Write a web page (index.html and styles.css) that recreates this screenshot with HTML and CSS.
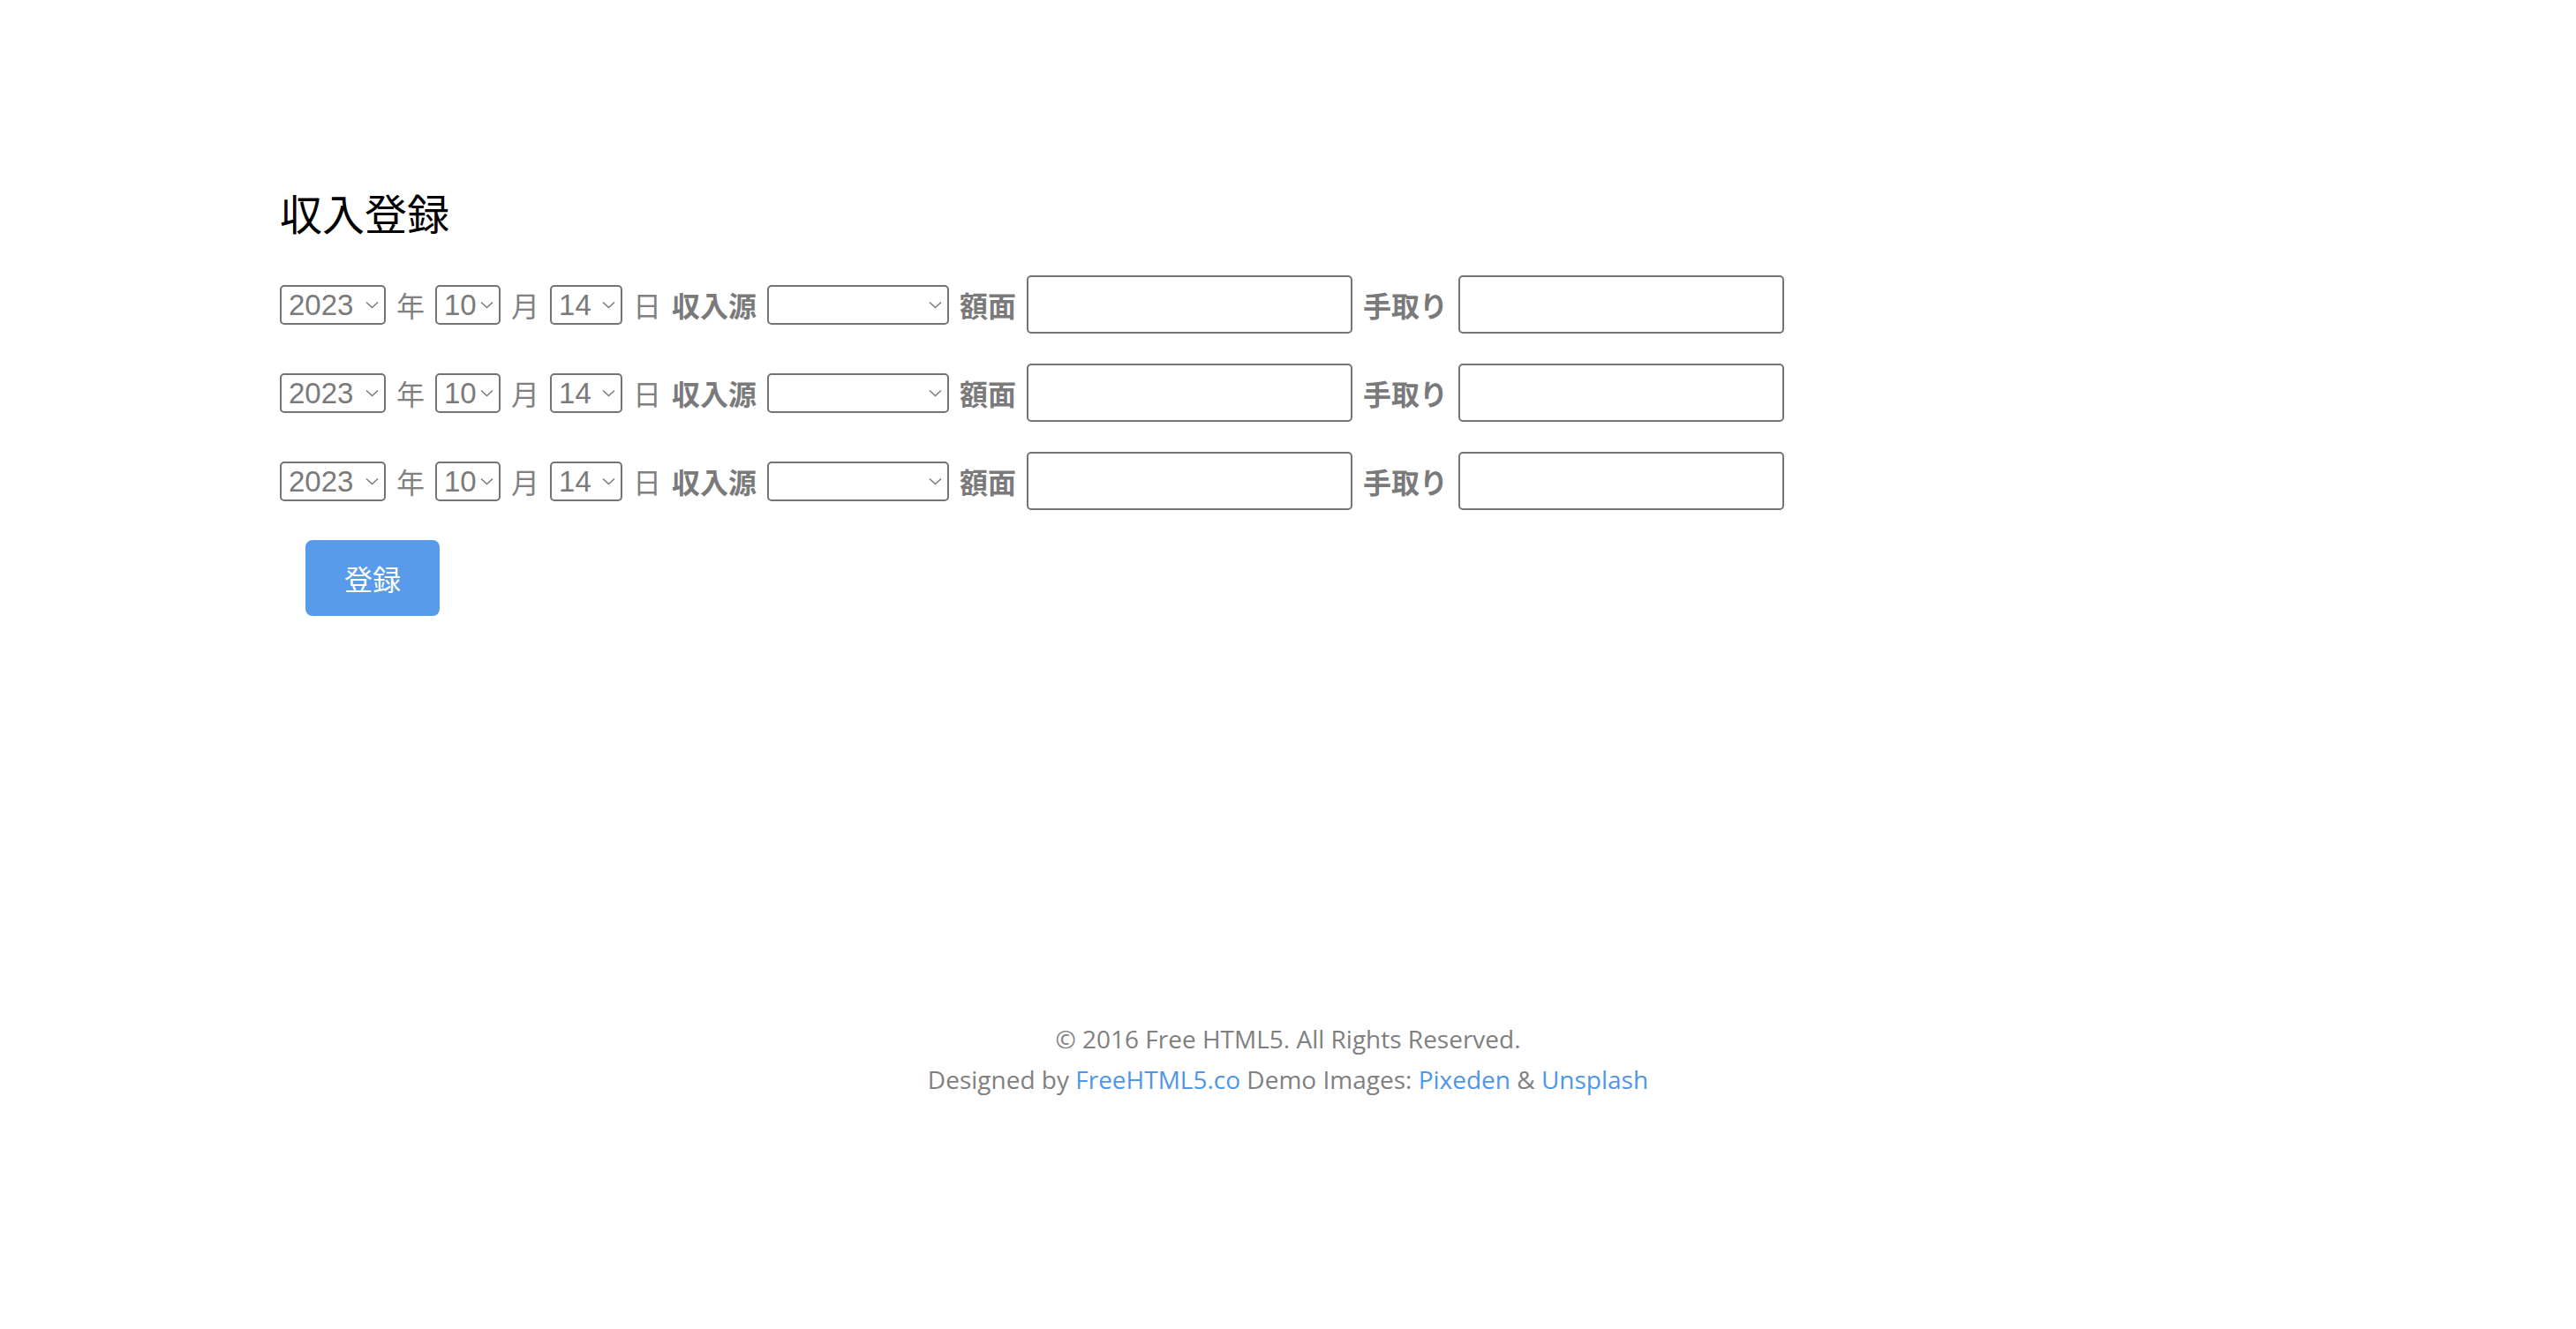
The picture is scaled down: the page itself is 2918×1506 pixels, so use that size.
FILE: index.html
```html
<!DOCTYPE html>
<html lang="ja">
<head>
<meta charset="utf-8">
<title>収入登録</title>
<link rel="stylesheet" href="styles.css">
</head>
<body>
<main class="page">
  <h2 class="title">収入登録</h2>
  <form class="form">
    <div class="row">
      <span class="sel sel-year"><select><option>2023</option></select><svg class="chev" width="15" height="9" viewBox="0 0 15 9"><path d="M1 1.5l6.5 6 6.5-6" fill="none" stroke="#7a7a7a" stroke-width="1.5"/></svg></span>
      <span class="lbl">年</span>
      <span class="sel sel-month"><select><option>10</option></select><svg class="chev" width="15" height="9" viewBox="0 0 15 9"><path d="M1 1.5l6.5 6 6.5-6" fill="none" stroke="#7a7a7a" stroke-width="1.5"/></svg></span>
      <span class="lbl">月</span>
      <span class="sel sel-day"><select><option>14</option></select><svg class="chev" width="15" height="9" viewBox="0 0 15 9"><path d="M1 1.5l6.5 6 6.5-6" fill="none" stroke="#7a7a7a" stroke-width="1.5"/></svg></span>
      <span class="lbl">日</span>
      <span class="lbl bold">収入源</span>
      <span class="sel sel-src"><select><option></option></select><svg class="chev" width="15" height="9" viewBox="0 0 15 9"><path d="M1 1.5l6.5 6 6.5-6" fill="none" stroke="#7a7a7a" stroke-width="1.5"/></svg></span>
      <span class="lbl bold">額面</span>
      <input class="txt" type="text">
      <span class="lbl bold">手取り</span>
      <input class="txt" type="text">
    </div>
    <div class="row">
      <span class="sel sel-year"><select><option>2023</option></select><svg class="chev" width="15" height="9" viewBox="0 0 15 9"><path d="M1 1.5l6.5 6 6.5-6" fill="none" stroke="#7a7a7a" stroke-width="1.5"/></svg></span>
      <span class="lbl">年</span>
      <span class="sel sel-month"><select><option>10</option></select><svg class="chev" width="15" height="9" viewBox="0 0 15 9"><path d="M1 1.5l6.5 6 6.5-6" fill="none" stroke="#7a7a7a" stroke-width="1.5"/></svg></span>
      <span class="lbl">月</span>
      <span class="sel sel-day"><select><option>14</option></select><svg class="chev" width="15" height="9" viewBox="0 0 15 9"><path d="M1 1.5l6.5 6 6.5-6" fill="none" stroke="#7a7a7a" stroke-width="1.5"/></svg></span>
      <span class="lbl">日</span>
      <span class="lbl bold">収入源</span>
      <span class="sel sel-src"><select><option></option></select><svg class="chev" width="15" height="9" viewBox="0 0 15 9"><path d="M1 1.5l6.5 6 6.5-6" fill="none" stroke="#7a7a7a" stroke-width="1.5"/></svg></span>
      <span class="lbl bold">額面</span>
      <input class="txt" type="text">
      <span class="lbl bold">手取り</span>
      <input class="txt" type="text">
    </div>
    <div class="row">
      <span class="sel sel-year"><select><option>2023</option></select><svg class="chev" width="15" height="9" viewBox="0 0 15 9"><path d="M1 1.5l6.5 6 6.5-6" fill="none" stroke="#7a7a7a" stroke-width="1.5"/></svg></span>
      <span class="lbl">年</span>
      <span class="sel sel-month"><select><option>10</option></select><svg class="chev" width="15" height="9" viewBox="0 0 15 9"><path d="M1 1.5l6.5 6 6.5-6" fill="none" stroke="#7a7a7a" stroke-width="1.5"/></svg></span>
      <span class="lbl">月</span>
      <span class="sel sel-day"><select><option>14</option></select><svg class="chev" width="15" height="9" viewBox="0 0 15 9"><path d="M1 1.5l6.5 6 6.5-6" fill="none" stroke="#7a7a7a" stroke-width="1.5"/></svg></span>
      <span class="lbl">日</span>
      <span class="lbl bold">収入源</span>
      <span class="sel sel-src"><select><option></option></select><svg class="chev" width="15" height="9" viewBox="0 0 15 9"><path d="M1 1.5l6.5 6 6.5-6" fill="none" stroke="#7a7a7a" stroke-width="1.5"/></svg></span>
      <span class="lbl bold">額面</span>
      <input class="txt" type="text">
      <span class="lbl bold">手取り</span>
      <input class="txt" type="text">
    </div>
    <div class="actions">
      <button class="btn" type="button">登録</button>
    </div>
  </form>
</main>
<footer class="footer">
  <p class="foot-line">© 2016 Free HTML5. All Rights Reserved.</p>
  <p class="foot-line">Designed by <a href="#">FreeHTML5.co</a> Demo Images: <a href="#">Pixeden</a> &amp; <a href="#">Unsplash</a></p>
</footer>
</body>
</html>
```

FILE: styles.css
```css
html, body {
  margin: 0;
  padding: 0;
  background: #ffffff;
}

body {
  font-family: "Noto Sans CJK JP", "Noto Sans", sans-serif;
  color: #808080;
}

.page {
  padding: 216px 0 0 317px;
}

.title {
  margin: 0 0 48px 0;
  font-family: "Noto Sans CJK JP", sans-serif;
  font-weight: 400;
  font-size: 48px;
  line-height: 48px;
  color: #000000;
}

.form {
  display: flex;
  flex-direction: column;
  gap: 34px;
}

.row {
  display: flex;
  align-items: center;
  gap: 12px;
  height: 66px;
}

.lbl {
  font-family: "Noto Sans CJK JP", sans-serif;
  font-size: 32px;
  line-height: 40px;
  color: #808080;
  white-space: nowrap;
}

.lbl.bold {
  font-weight: 700;
  color: #7a7a7a;
}

.sel {
  position: relative;
  display: block;
  height: 45px;
}

.sel select {
  -webkit-appearance: none;
  appearance: none;
  box-sizing: border-box;
  height: 45px;
  width: 100%;
  margin: 0;
  padding: 0 0 0 8px;
  border: 2px solid #747474;
  border-radius: 5px;
  background: #ffffff;
  font-family: "Liberation Sans", Arial, sans-serif;
  font-size: 33px;
  color: #7a7a7a;
  outline: none;
}

.sel .chev {
  position: absolute;
  right: 8px;
  top: 18px;
  pointer-events: none;
}

.sel-year { width: 120px; }
.sel-month { width: 74px; }
.sel-day { width: 82px; }
.sel-src { width: 206px; }

.txt {
  box-sizing: border-box;
  width: 369px;
  height: 66px;
  margin: 0;
  padding: 0 10px;
  border: 2px solid #747474;
  border-radius: 5px;
  background: #ffffff;
  font-size: 28px;
  outline: none;
}

.actions {
  padding-left: 29px;
}

.btn {
  box-sizing: border-box;
  width: 152px;
  height: 86px;
  border: none;
  border-radius: 8px;
  background: #589bea;
  color: #ffffff;
  font-family: "Noto Sans CJK JP", sans-serif;
  font-size: 32px;
  line-height: 40px;
  padding: 0;
  cursor: pointer;
}

.footer {
  margin-top: 456px;
  text-align: center;
  font-family: "Open Sans", "Liberation Sans", sans-serif;
  font-size: 28px;
  line-height: 46px;
  color: #808080;
}

.foot-line {
  margin: 0;
}

.footer a {
  color: #4f96e8;
  text-decoration: none;
}
```
